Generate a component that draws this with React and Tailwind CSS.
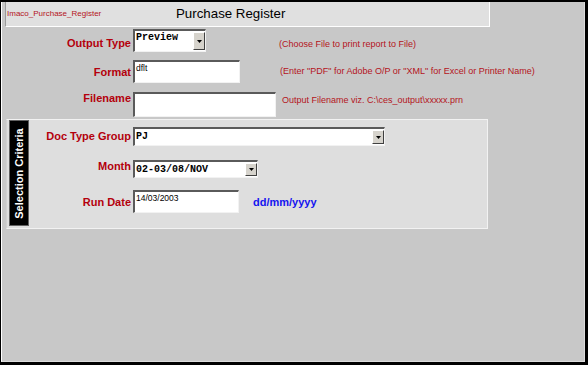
import React from 'react';

const inset =
  'border-t-2 border-l-2 border-r border-b border-t-[#5a5a5a] border-l-[#5a5a5a] border-r-[#f2f2f2] border-b-[#f2f2f2] bg-white';
const label = 'text-right text-[11px] leading-[13px] font-bold text-[#b4000c]';
const hint = 'text-[9px] leading-[11px] text-[#b4141c] whitespace-nowrap';
const mono = "font-['Liberation_Mono',monospace] font-bold text-[10px] leading-[12px] text-black whitespace-nowrap";

function DropButton() {
  return (
    <div className="w-[12px] self-stretch my-[1px] mr-[0px] bg-[#d6d3cc] border-t border-l border-t-white border-l-white border-r border-b border-r-[#404040] border-b-[#404040] flex items-center justify-center">
      <svg width="5" height="3" viewBox="0 0 5 3">
        <path d="M0 0 H5 L2.5 3 Z" fill="#000" />
      </svg>
    </div>
  );
}

function Select({ value, className, align = 'items-center', textClass = '' }) {
  return (
    <div className={`${inset} ${className} flex`}>
      <div className={`flex-1 flex ${align} pl-[1px] ${textClass}`}>
        <span className={mono}>{value}</span>
      </div>
      <DropButton />
    </div>
  );
}

function TextBox({ value, className }) {
  return (
    <div className={`${inset} ${className}`}>
      <div className="pl-[1px] pt-[1px] text-[8.5px] leading-[10px] text-black">{value}</div>
    </div>
  );
}

export default function App() {
  return (
    <div className="w-[588px] h-[365px] bg-black pt-[2px] pl-[1px] pr-[3px] pb-[3px] font-['Liberation_Sans',Arial,sans-serif]">
      <div className="h-full bg-[#c8c8c8] border-l border-l-white border-r border-b border-r-[#dcdcdc] border-b-[#dcdcdc] overflow-hidden">
        {/* title strip */}
        <div className="ml-[3px] w-[485px] h-[25px] bg-[#e0e0e0] border-l border-l-[#9a9a9a] border-r border-b border-r-white border-b-white flex items-center pl-[1px]">
          <span className="w-[169px] text-[8px] leading-[10px] text-[#b4141c] whitespace-nowrap">Imaco_Purchase_Register</span>
          <span className="text-[13.3px] leading-[16px] text-black whitespace-nowrap">Purchase Register</span>
        </div>

        {/* Output type */}
        <div className="flex mt-[2px] h-[23px]">
          <div className={`w-[129px] pt-[8px] ${label}`}>Output Type</div>
          <Select value="Preview" className="ml-[2px] w-[73px] h-[23px]" align="items-start" textClass="pt-[1px]" />
          <div className={`ml-[73px] pt-[10px] ${hint}`}>(Choose File to print report to File)</div>
        </div>

        {/* Format */}
        <div className="flex mt-[8px] h-[23px]">
          <div className={`w-[129px] pt-[6px] ${label}`}>Format</div>
          <TextBox value="dflt" className="ml-[2px] w-[107px] h-[23px]" />
          <div className={`ml-[40px] pt-[6px] ${hint}`}>
            (Enter "PDF" for Adobe O/P or "XML" for Excel or Printer Name)
          </div>
        </div>

        {/* Filename */}
        <div className="flex mt-[9px] h-[25px]">
          <div className={`w-[129px] pt-0 ${label}`}>Filename</div>
          <TextBox value="" className="ml-[2px] w-[143px] h-[25px]" />
          <div className={`ml-[6px] pt-[3px] ${hint}`}>Output Filename viz. C:\ces_output\xxxxx.prn</div>
        </div>

        {/* Selection criteria */}
        <div className="ml-[4px] mt-[2px] w-[482px] h-[110px] bg-[#dedede] border border-[#f2f2f2] border-l-[#d0d0d0] flex items-start">
          <div className="ml-[2px] w-[20px] h-[106px] bg-black border border-[#606060] flex items-center justify-center">
            <span className="-rotate-90 whitespace-nowrap text-white text-[11px] leading-[13px] font-bold">
              Selection Criteria
            </span>
          </div>

          <div className="flex flex-col">
            <div className="flex mt-[7px] h-[19px]">
              <div className={`w-[102px] pt-[3px] ${label}`}>Doc Type Group</div>
              <Select value="PJ" className="ml-[2px] w-[252px] h-[19px]" />
            </div>

            <div className="flex mt-[14px] h-[18px]">
              <div className={`w-[102px] pt-0 ${label}`}>Month</div>
              <Select value="02-03/08/NOV" className="ml-[2px] w-[125px] h-[18px]" />
            </div>

            <div className="flex mt-[12px] h-[23px]">
              <div className={`w-[102px] pt-[6px] ${label}`}>Run Date</div>
              <TextBox value="14/03/2003" className="ml-[2px] w-[106px] h-[23px]" />
              <div className="ml-[14px] pt-[6px] text-[11px] leading-[13px] font-bold text-[#1414f0]">dd/mm/yyyy</div>
            </div>
          </div>
        </div>
      </div>
    </div>
  );
}
